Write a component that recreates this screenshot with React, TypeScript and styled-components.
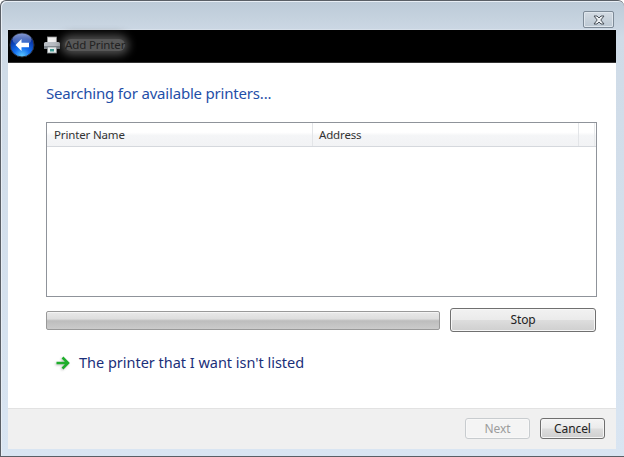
import styled, { createGlobalStyle } from "styled-components"

const Global = createGlobalStyle`
  html, body {
    margin: 0;
    padding: 0;
    background: #fff;
  }
  * {
    box-sizing: border-box;
  }
`

const App: React.FC = () => {
  return (
    <>
      <Global />
      <Window>
        <TitleStrip>
          <CloseButton>
            <svg width="16" height="10" viewBox="0 0 16 10">
              <path d="M3 1h3l2 2 2-2h3l-3.200 4 3.200 4h-3l-2-2-2 2h-3l3.200-4z" fill="#eef1f4" stroke="#4b525a" strokeWidth="1" />
            </svg>
          </CloseButton>
        </TitleStrip>
        <Client>
          <NavBar>
            <BackButton>
              <svg width="28" height="28" viewBox="0 0 28 28">
                <defs>
                  <radialGradient id="orb" cx="50%" cy="95%" r="75%">
                    <stop offset="0" stopColor="#5cc8ff" />
                    <stop offset="0.45" stopColor="#1470f0" />
                    <stop offset="1" stopColor="#0730a0" />
                  </radialGradient>
                  <linearGradient id="shine" x1="0" y1="0" x2="0" y2="1">
                    <stop offset="0" stopColor="#ffffff" stopOpacity="0.5" />
                    <stop offset="1" stopColor="#ffffff" stopOpacity="0.08" />
                  </linearGradient>
                </defs>
                <circle cx="14" cy="14" r="12" fill="url(#orb)" stroke="#2b3038" strokeWidth="1" />
                <ellipse cx="14" cy="8.500" rx="9.500" ry="6" fill="url(#shine)" />
                <path d="M13.500 8 7.500 14l6 6v-3.800h7.500v-4.400h-7.500z" fill="#fff" />
              </svg>
            </BackButton>
            <PrinterIcon>
              <svg width="18" height="18" viewBox="0 0 18 18">
                <rect x="4.500" y="1" width="9" height="6" fill="#f1f1f1" stroke="#9a9a9a" strokeWidth="0.800" />
                <path d="M1 7.500q0-1.500 1.500-1.500h13q1.500 0 1.500 1.500v5.500h-16z" fill="#b9bec4" />
                <rect x="1" y="10" width="16" height="3" fill="#7f868d" />
                <rect x="4.500" y="11" width="9" height="6" fill="#e9eeee" stroke="#8a8f94" strokeWidth="0.800" />
                <rect x="7" y="13" width="4" height="2.500" fill="#3f9b93" />
              </svg>
            </PrinterIcon>
            <NavTitle>Add Printer</NavTitle>
          </NavBar>
          <Content>
            <Heading>Searching for available printers...</Heading>
            <ListBox>
              <ListHeader>
                <NameColumn>Printer Name</NameColumn>
                <AddressColumn>Address</AddressColumn>
                <SpareColumn />
              </ListHeader>
            </ListBox>
            <ProgressRow>
              <ProgressBar />
              <StopButton>Stop</StopButton>
            </ProgressRow>
            <LinkRow>
              <LinkArrow width="16" height="14" viewBox="0 0 16 14">
                <path d="M8.500 1.500 14 7l-5.500 5.500M14 7H2.500" fill="none" stroke="#1fae2c" strokeWidth="2.600" />
              </LinkArrow>
              <LinkText>The printer that I want isn't listed</LinkText>
            </LinkRow>
          </Content>
          <Footer>
            <DialogButton disabled>Next</DialogButton>
            <DialogButton>Cancel</DialogButton>
          </Footer>
        </Client>
      </Window>
    </>
  )
}

const uiFont = `"Noto Sans", "Open Sans", "Liberation Sans", sans-serif`

const Window = styled.div`
  display: flex;
  flex-direction: column;
  width: 624px;
  height: 457px;
  padding: 0 8px 7px;
  background: linear-gradient(180deg, #bccad7 0%, #cfdbe7 8%, #d9e5f2 100%);
  border: 1px solid #5a5f66;
  border-width: 1px 0 1px 1px;
  border-radius: 6px 6px 0 0;
  box-shadow: inset 1px 1px 0 #e8eef5;
  font-family: ${uiFont};
  overflow: hidden;
`

const TitleStrip = styled.div`
  display: flex;
  justify-content: flex-end;
  align-items: flex-start;
  flex: none;
  height: 28px;
  padding: 10px 2px 0 0;
  margin-left: -1px;
`

const CloseButton = styled.div`
  display: flex;
  align-items: center;
  justify-content: center;
  width: 31px;
  height: 17px;
  background: linear-gradient(180deg, #d3dbe3, #bcc8d3);
  border: 1px solid #7d8a97;
  border-radius: 2px;
  box-shadow: inset 0 0 0 1px #dfe6ed;
`

const Client = styled.div`
  display: flex;
  flex-direction: column;
  flex: 1;
  margin-left: -1px;
  background: #fff;
`

const NavBar = styled.div`
  display: flex;
  align-items: center;
  flex: none;
  height: 34px;
  padding-bottom: 3px;
  background: #000;
  border-top: 1px solid #d7e0ea;
  border-bottom: 1px solid #333;
`

const BackButton = styled.div`
  display: flex;
  flex: none;
  width: 28px;
  height: 28px;
`

const PrinterIcon = styled.div`
  display: flex;
  flex: none;
  margin-left: 7px;
`

const NavTitle = styled.span`
  margin-left: 4px;
  font-size: 11.5px;
  letter-spacing: -0.12px;
  color: #222;
  border-radius: 8px;
  background: #585858;
  box-shadow: 0 0 8px 4px #4e4e4e;
  line-height: 12px;
`

const Content = styled.div`
  display: flex;
  flex-direction: column;
  flex: 1;
  padding: 21px 19px 0 38px;
`

const Heading = styled.h1`
  margin: 0;
  height: 18px;
  line-height: 18px;
  font-size: 15px;
  font-weight: 400;
  letter-spacing: -0.19px;
  color: #1f4fa8;
`

const ListBox = styled.div`
  flex: none;
  height: 175px;
  margin-top: 20px;
  background: #fff;
  border: 1px solid #8f939a;
`

const ListHeader = styled.div`
  display: flex;
  height: 24px;
  background: linear-gradient(180deg, #ffffff 0%, #ffffff 40%, #f4f5f7 55%, #f2f3f5 100%);
  border-bottom: 1px solid #d5d8dd;
`

const NameColumn = styled.div`
  width: 266px;
  padding-left: 7px;
  font-size: 11.5px;
  line-height: 24px;
  letter-spacing: -0.15px;
  color: #333;
  border-right: 1px solid #e3e5e8;
`

const AddressColumn = styled(NameColumn)`
  width: 266px;
  padding-left: 6px;
`

const SpareColumn = styled.div`
  flex: 1;
  margin-right: 1px;
  border-right: 1px solid #e8eaec;
`

const ProgressRow = styled.div`
  display: flex;
  align-items: center;
  gap: 10px;
  margin-top: 11px;
`

const ProgressBar = styled.div`
  width: 394px;
  height: 19px;
  border: 1px solid #999;
  border-radius: 2px;
  background: linear-gradient(180deg, #e9e9e9 0%, #dedede 40%, #bdbdbd 52%, #cbcbcb 100%);
  box-shadow: inset 0 1px 0 #f4f4f4;
`

const StopButton = styled.div`
  display: flex;
  align-items: center;
  justify-content: center;
  width: 146px;
  height: 24px;
  padding-bottom: 2px;
  font-size: 12px;
  letter-spacing: -0.1px;
  color: #222;
  border: 1px solid #707070;
  border-radius: 3px;
  background: linear-gradient(180deg, #f2f2f2 0%, #ebebeb 48%, #dddddd 52%, #cfcfcf 100%);
  box-shadow: inset 0 0 0 1px #f7f7f7;
`

const LinkRow = styled.div`
  display: flex;
  align-items: center;
  gap: 9px;
  height: 22px;
  margin-top: 20px;
  padding-left: 8px;
`

const LinkArrow = styled.svg`
  filter: drop-shadow(-1px 1px 1px rgba(0, 0, 0, 0.25));
`

const LinkText = styled.span`
  font-size: 14.5px;
  letter-spacing: -0.02px;
  color: #1a2f7a;
  padding-bottom: 2px;
`

const Footer = styled.div`
  display: flex;
  justify-content: flex-end;
  align-items: flex-start;
  gap: 10px;
  flex: none;
  height: 41px;
  padding: 9px 11px 0 0;
  background: #f0f0f0;
  border-top: 1px solid #e2e2e2;
`

const DialogButton = styled.div<{ disabled?: boolean }>`
  display: flex;
  align-items: center;
  justify-content: center;
  width: 65px;
  height: 21px;
  padding-bottom: 1px;
  font-size: 12px;
  letter-spacing: -0.1px;
  color: ${(p) => (p.disabled ? "#9c9c9c" : "#222")};
  border: 1px solid ${(p) => (p.disabled ? "#c8cccf" : "#6f6f6f")};
  border-radius: 3px;
  background: ${(p) =>
    p.disabled
      ? "#f4f4f4"
      : "linear-gradient(180deg, #f4f4f4 0%, #ebebeb 48%, #dddddd 52%, #cfcfcf 100%)"};
  box-shadow: inset 0 0 0 1px ${(p) => (p.disabled ? "#f8f8f8" : "#f5f5f5")};
`

export default App
